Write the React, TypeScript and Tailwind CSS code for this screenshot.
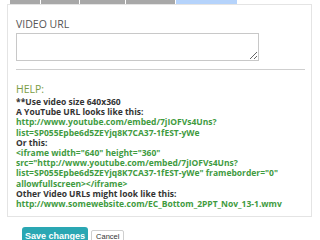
import React from "react";

export default function App() {
  const green = "text-[#3f9b3f]";
  return (
    <div className="w-[320px] h-[240px] overflow-hidden bg-white relative" style={{ fontFamily: '"Open Sans", sans-serif' }}>
      <div className="flex h-[4px] pl-[10px] gap-[1px]">
        <div className="w-[30px] bg-[#a8a8a8]" />
        <div className="w-[38px] bg-[#a8a8a8]" />
        <div className="w-[45px] bg-[#a8a8a8]" />
        <div className="w-[49px] bg-[#a8a8a8]" />
        <div className="w-[61px] bg-[#b5d3fb]" />
      </div>
      <div className="ml-[7px] w-[305px] h-[213px] border border-[#e4e4e4] pl-[8px] pr-[6px]">
        <div className="mt-[13px] text-[10.5px] leading-[12px] text-[#555]">VIDEO URL</div>
        <textarea className="block mt-[3px] w-[243px] h-[28px] border border-[#c8c8c8] rounded-none outline-none" />
        <div className="mt-[8px] h-[1px] bg-[#cfcfcf] w-[289px]" />
        <div className="mt-[13px] text-[10.5px] leading-[12px] text-[#7a9d45]">HELP:</div>
        <div className="mt-[2px] text-[8.5px] leading-[10.2px] font-bold text-[#333]">
          <div>**Use video size 640x360</div>
          <div>A YouTube URL looks like this:</div>
          <div className={green}>http://www.youtube.com/embed/7jIOFVs4Uns?</div>
          <div className={green}>list=SP055Epbe6d5ZEYjq8K7CA37-1fEST-yWe</div>
          <div>Or this:</div>
          <div className={green}>&lt;iframe width="640" height="360"</div>
          <div className={green}>src="http://www.youtube.com/embed/7jIOFVs4Uns?</div>
          <div className={green}>list=SP055Epbe6d5ZEYjq8K7CA37-1fEST-yWe" frameborder="0"</div>
          <div className={green}>allowfullscreen&gt;&lt;/iframe&gt;</div>
          <div>Other Video URLs might look like this:</div>
          <div className={green}>http://www.somewebsite.com/EC_Bottom_2PPT_Nov_13-1.wmv</div>
        </div>
      </div>
      <div className="flex items-start gap-[3px] pl-[22px] mt-[10px]">
        <button className="h-[18px] px-[3px] rounded-[3px] bg-[#2aa7b3] text-white text-[9px] font-bold leading-[18px]" style={{ fontFamily: '"Liberation Sans", sans-serif' }}>Save changes</button>
        <button className="mt-[3px] h-[14px] px-[4px] rounded-[2px] border border-[#cfcfcf] bg-white text-[#333] text-[7.5px] leading-[12px]" style={{ fontFamily: '"Liberation Sans", sans-serif' }}>Cancel</button>
      </div>
    </div>
  );
}
